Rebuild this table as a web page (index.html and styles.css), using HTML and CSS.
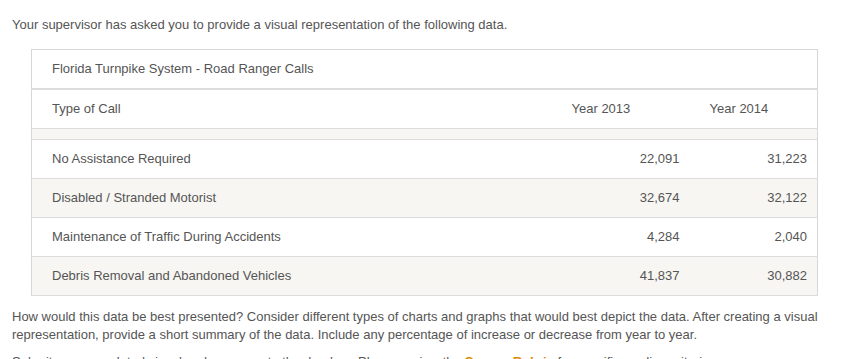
FILE: index.html
```html
<!DOCTYPE html>
<html lang="en">
<head>
<meta charset="utf-8">
<title>Road Ranger Calls</title>
<link rel="stylesheet" href="styles.css">
</head>
<body>
<div class="page">
  <p class="intro">Your supervisor has asked you to provide a visual representation of the following data.</p>
  <table class="data">
    <colgroup><col class="k1"><col class="k2"><col class="k3"></colgroup>
    <tr class="title-row"><td colspan="3">Florida Turnpike System - Road Ranger Calls</td></tr>
    <tr class="head-row"><td>Type of Call</td><td>Year 2013</td><td>Year 2014</td></tr>
    <tr class="spacer"><td colspan="3"></td></tr>
    <tr><td>No Assistance Required</td><td class="num">22,091</td><td class="num">31,223</td></tr>
    <tr class="alt"><td>Disabled / Stranded Motorist</td><td class="num">32,674</td><td class="num">32,122</td></tr>
    <tr><td>Maintenance of Traffic During Accidents</td><td class="num">4,284</td><td class="num">2,040</td></tr>
    <tr class="alt"><td>Debris Removal and Abandoned Vehicles</td><td class="num">41,837</td><td class="num">30,882</td></tr>
  </table>
  <p class="para">How would this data be best presented? Consider different types of charts and graphs that would best depict the data. After creating a visual representation, provide a short summary of the data. Include any percentage of increase or decrease from year to year.</p>
  <p class="para">Submit your completed visual and summary to the dropbox. Please review the <a class="link" href="#">Course Rubric</a> for specific grading criteria.</p>
</div>
</body>
</html>
```
FILE: styles.css
```css
html, body {
  margin: 0;
  padding: 0;
  background: #ffffff;
}
.page {
  padding: 16px 12px 0 12px;
  font-family: "Liberation Sans", Arial, sans-serif;
  font-size: 13px;
  color: #555555;
  line-height: 18px;
}
.intro {
  margin: 0 0 15px 0;
}
.data {
  margin-left: 19px;
  width: 786px;
  border-collapse: collapse;
  border: 1px solid #d6d6d6;
  table-layout: fixed;
}
.k1 { width: 520px; }
.k2 { width: 138px; }
.k3 { width: 128px; }
.data td {
  height: 38px;
  padding: 0 10px 0 20px;
  border-bottom: 1px solid #dcdcdc;
  vertical-align: middle;
  white-space: nowrap;
}
.title-row td {
  height: 38px;
  border-bottom: 2px solid #dcdcdc;
}
.spacer td {
  height: 10px;
  background: #f7f6f2;
}
.alt td {
  background: #f7f6f2;
}
.num {
  text-align: right;
}
.para {
  margin: 12px 0 0 0;
}
.para + .para {
  margin-top: 9px;
}
.link {
  color: #e08a00;
  font-weight: bold;
  text-decoration: none;
}
```
